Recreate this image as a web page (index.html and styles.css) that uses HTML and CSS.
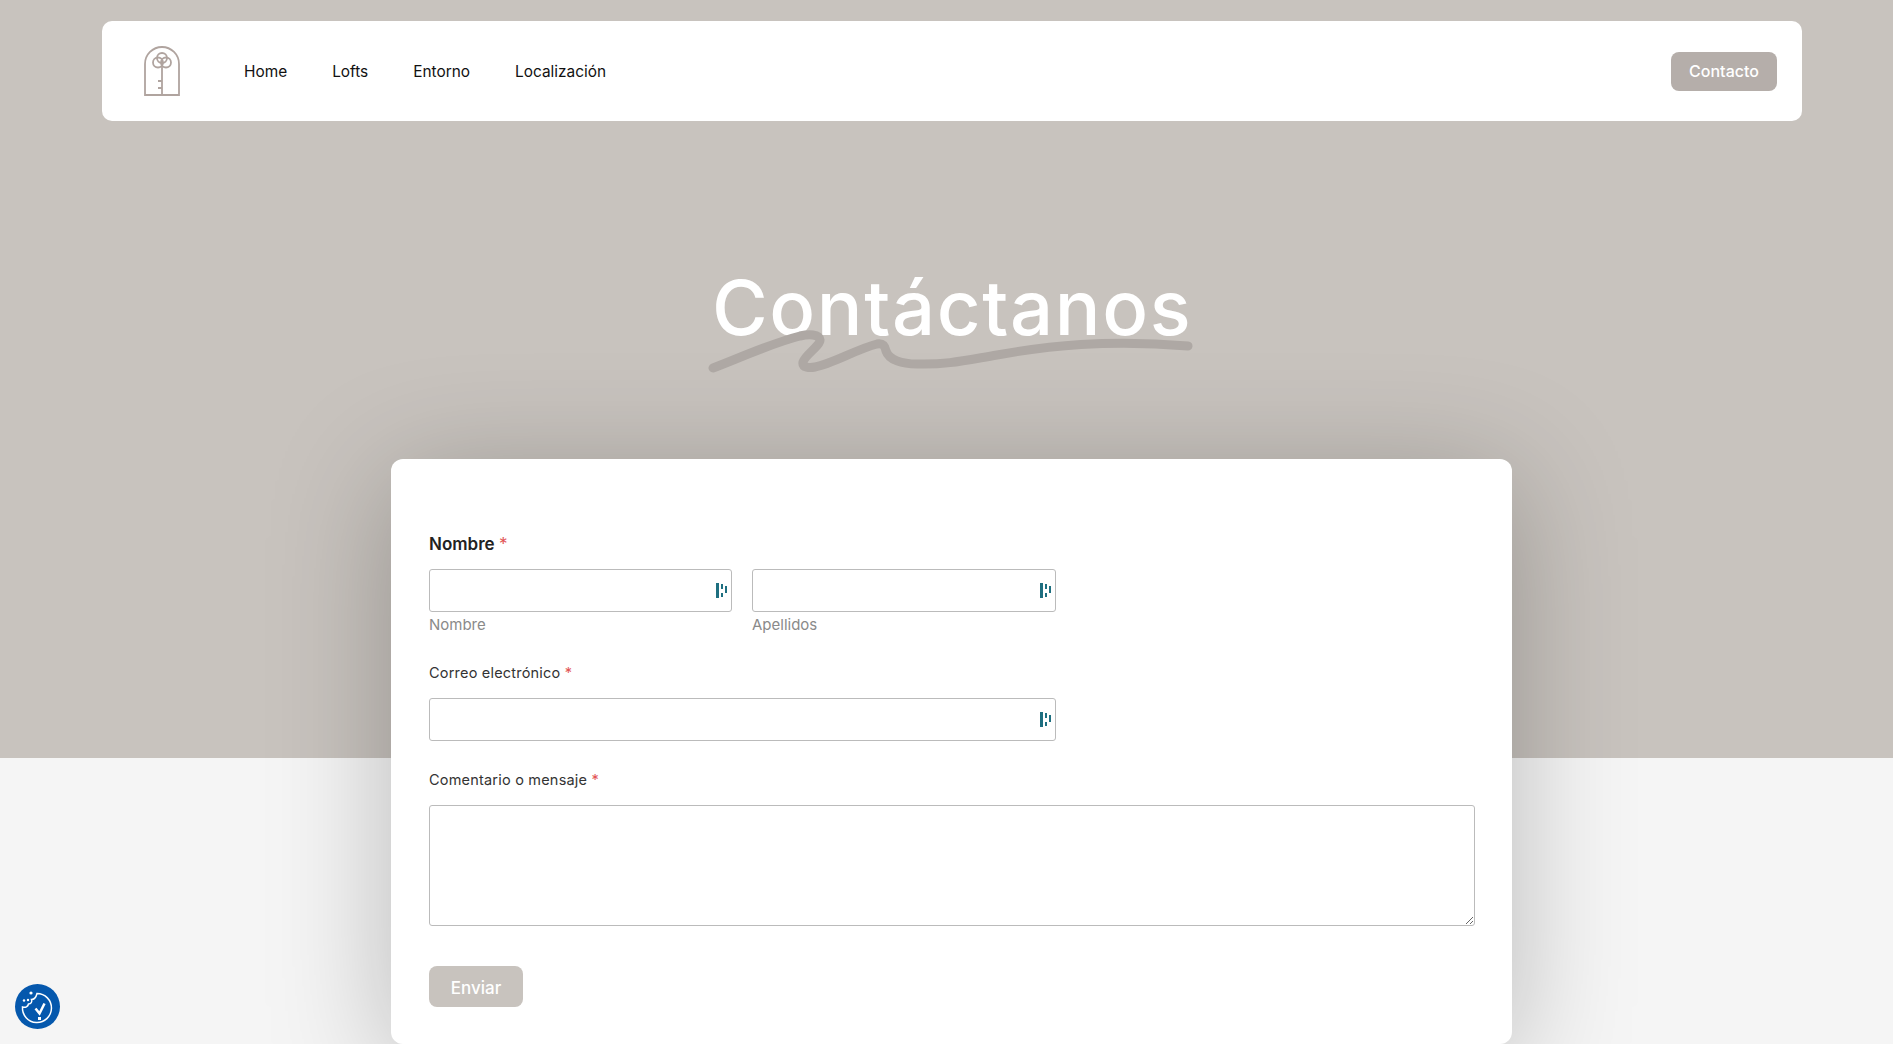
FILE: index.html
```html
<!DOCTYPE html>
<html lang="es">
<head>
    <meta charset="UTF-8">
    <meta name="viewport" content="width=device-width, initial-scale=1.0">
    <title>Contáctanos</title>
    <link rel="stylesheet" href="styles.css">
</head>
<body>
    <div class="page">
        <header class="navbar">
            <div class="nav-left">
                <a href="#" class="logo">
                    <svg width="36" height="50" viewBox="0 0 36 50" fill="none" stroke="#b0a49f" stroke-width="1.8">
                        <path d="M1 49V18a17 17 0 0 1 34 0v31z"/>
                        <circle cx="18" cy="12" r="5"/>
                        <circle cx="14" cy="16.5" r="5"/>
                        <circle cx="22" cy="16.5" r="5"/>
                        <path d="M18 21v28M14 35h4M14 42h4"/>
                    </svg>
                </a>
                <nav class="nav-links">
                    <a href="#">Home</a>
                    <a href="#">Lofts</a>
                    <a href="#">Entorno</a>
                    <a href="#">Localización</a>
                </nav>
            </div>
            <a href="#" class="nav-btn">Contacto</a>
        </header>

        <h1 class="title">
            Contáctanos
            <svg class="squiggle" width="490" height="50" viewBox="0 0 490 50" fill="none" stroke="#aea8a4" stroke-width="9" stroke-linecap="round" stroke-linejoin="round">
                <path d="M6 41C30 32 65 16 93 9c9-2 19-2 20 4 0 6-15 15-17 22-1 6 7 6 12 5 17-3 42-18 62-23 6-1 8 2 9 7 3 9 16 13 31 13 30 1 50-4 80-9 50-9 110-16 191-9"/>
            </svg>
        </h1>

        <main class="card">
            <form>
                <p class="label label-main">Nombre <span class="req">*</span></p>
                <div class="name-row">
                    <div class="name-col">
                        <div class="field">
                            <input type="text">
                            <svg class="field-icon" width="12" height="15" viewBox="0 0 12 15" fill="#1e6f80"><path d="M0 0h3v15H0zM5 1h2v5H5zM5 10h2v4H5zM9 3h2v7H9z"/></svg>
                        </div>
                        <span class="hint">Nombre</span>
                    </div>
                    <div class="name-col">
                        <div class="field">
                            <input type="text">
                            <svg class="field-icon" width="12" height="15" viewBox="0 0 12 15" fill="#1e6f80"><path d="M0 0h3v15H0zM5 1h2v5H5zM5 10h2v4H5zM9 3h2v7H9z"/></svg>
                        </div>
                        <span class="hint">Apellidos</span>
                    </div>
                </div>

                <p class="label">Correo electrónico <span class="req">*</span></p>
                <div class="field field-email">
                    <input type="email">
                    <svg class="field-icon" width="12" height="15" viewBox="0 0 12 15" fill="#1e6f80"><path d="M0 0h3v15H0zM5 1h2v5H5zM5 10h2v4H5zM9 3h2v7H9z"/></svg>
                </div>

                <p class="label label-msg">Comentario o mensaje <span class="req">*</span></p>
                <textarea class="message"></textarea>

                <button type="button" class="send-btn">Enviar</button>
            </form>
        </main>
    </div>

    <a href="#" class="cookie-badge">
        <svg width="45" height="45" viewBox="0 0 45 45" fill="none" stroke="#fff">
            <path stroke-width="1.5" d="M22 9.500A14.500 14.500 0 1 1 7.500 23c3 1 5.500-.5 6-3 2.500 0 4-2 3-4.500 2.500 0 4.500-2 5.500-6z"/>
            <path stroke-width="2.500" d="M20.500 24.500l4 5 5-10"/>
            <g fill="#fff" stroke="none">
                <rect x="23" y="33" width="3" height="3"/>
                <circle cx="16" cy="9" r="1.600"/>
                <circle cx="9" cy="16.500" r="1.200"/>
                <circle cx="13" cy="16" r="1.200"/>
            </g>
        </svg>
    </a>
</body>
</html>
```

FILE: styles.css
```css
:root {
    --sand: #c8c3be;
    --sand-dark: #b5aeaa;
    --light: #f5f5f5;
    --border: #bbbbbb;
}

* {
    box-sizing: border-box;
    margin: 0;
    padding: 0;
    font-family: 'Inter', 'Liberation Sans', sans-serif;
}

body {
    min-height: 100vh;
    overflow: hidden;
    background: linear-gradient(var(--sand) 758px, var(--light) 758px);
}

a {
    text-decoration: none;
}

.page {
    padding: 21px 91px 0 102px;
}

.navbar {
    display: flex;
    align-items: center;
    justify-content: space-between;
    height: 100px;
    padding: 0 25px 0 42px;
    background: white;
    border-radius: 10px;
}

.nav-left {
    display: flex;
    align-items: center;
}

.logo {
    display: flex;
    margin-right: 64px;
}

.nav-links {
    display: flex;
    gap: 45px;
}

.nav-links a {
    color: #111;
    font-size: 15.4px;
    font-weight: 400;
}

.nav-btn {
    width: 106px;
    height: 39px;
    line-height: 39px;
    text-align: center;
    color: white;
    font-size: 16px;
    font-weight: 500;
    background: var(--sand-dark);
    border-radius: 8px;
}

.title {
    position: relative;
    width: 480px;
    margin: 126px auto 92px;
    line-height: 120px;
    color: white;
    font-size: 76px;
    font-weight: 500;
    letter-spacing: 1.6px;
    text-align: center;
    white-space: nowrap;
}

.squiggle {
    position: absolute;
    left: -5px;
    top: 80px;
}

.card {
    width: 1121px;
    height: 585px;
    margin-left: 289px;
    padding: 73px 37px 37px 38px;
    background: white;
    border-radius: 12px;
    box-shadow: 0 20px 120px rgba(0, 0, 0, 0.25);
}

.label {
    line-height: 24px;
    margin-bottom: 13px;
    color: #333;
    font-size: 14.5px;
    letter-spacing: 0.2px;
}

.label-main {
    color: #222;
    font-size: 17px;
    font-weight: 600;
    letter-spacing: 0;
}

.label-msg {
    margin-top: 27px;
}

.req {
    color: #e25555;
    font-weight: 400;
}

.name-row {
    display: flex;
    gap: 20px;
    margin-bottom: 26px;
}

.name-col {
    width: 303px;
}

.name-col:last-child {
    width: 304px;
}

.field {
    position: relative;
}

.field-email {
    width: 627px;
}

input,
.message {
    display: block;
    width: 100%;
    border: 1px solid var(--border);
    border-radius: 3px;
    background: white;
}

input {
    height: 43px;
}

.field-icon {
    position: absolute;
    top: 14px;
    right: 4px;
}

.hint {
    display: block;
    margin-top: 3px;
    line-height: 20px;
    color: #8a8a8a;
    font-size: 15px;
}

.message {
    width: 1046px;
    height: 121px;
    resize: both;
}

.send-btn {
    display: block;
    width: 94px;
    height: 41px;
    margin-top: 40px;
    padding-top: 2px;
    color: white;
    font-size: 17px;
    font-weight: 500;
    background: var(--sand);
    border: none;
    border-radius: 8px;
}

.cookie-badge {
    position: fixed;
    left: 15px;
    bottom: 15px;
    width: 45px;
    height: 45px;
    background: #0558ad;
    border-radius: 50%;
}
```
